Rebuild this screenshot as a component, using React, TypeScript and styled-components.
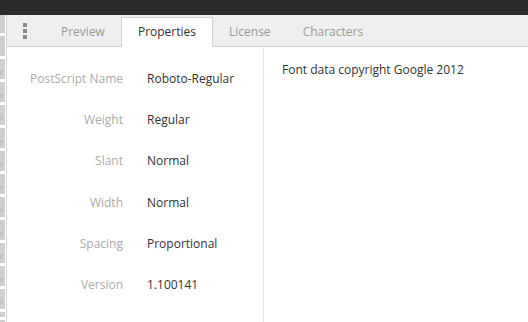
import React from "react";
import styled, { createGlobalStyle } from "styled-components";

const Global = createGlobalStyle`
  html, body { margin: 0; padding: 0; background: #fff; }
  body { font-family: "Open Sans", "Noto Sans", sans-serif; font-size: 12px; }
  #root { width: 528px; height: 322px; overflow: hidden; }
`;

const Window = styled.div`
  width: 528px;
  height: 322px;
  display: flex;
  flex-direction: column;
  overflow: hidden;
`;

const TitleBar = styled.div`
  height: 15px;
  flex: none;
  background: #2b2b2b;
`;

const Body = styled.div`
  flex: 1;
  display: flex;
  min-height: 0;
`;

const SideStrip = styled.div`
  width: 5px;
  flex: none;
  background: repeating-linear-gradient(
    to bottom,
    #ffffff 0px,
    #ffffff 3px,
    #cfcfcf 3px,
    #cfcfcf 23px
  );
  background-position: 0 -5px;
  border-right: 1px solid #ffffff;
`;

const StripGlyphs = styled.div`
  display: flex;
  flex-direction: column;
  gap: 19px;
  padding-top: 56px;
  align-items: flex-start;
`;

const Glyph = styled.span`
  width: 4px;
  height: 4px;
  background: linear-gradient(135deg, #9fb7d8, #e7d7a8);
  opacity: 0.9;
`;

const Panel = styled.div`
  flex: 1;
  display: flex;
  flex-direction: column;
  border-left: 1px solid #d6d6d6;
  min-width: 0;
`;

const TabBar = styled.div`
  height: 31px;
  flex: none;
  background: #efefef;
  border-bottom: 1px solid #d4d4d4;
  display: flex;
  align-items: flex-end;
  padding-left: 16px;
`;

const Handle = styled.div`
  display: flex;
  flex-direction: column;
  gap: 2px;
  align-self: center;
  margin-right: 18px;
`;

const Dot = styled.span`
  width: 4px;
  height: 4px;
  background: #8a8a8a;
`;

const Tab = styled.div<{ $active?: boolean }>`
  box-sizing: border-box;
  padding: 0 ${(p) => (p.$active ? "16px" : "15px")} 2px;
  display: flex;
  align-items: center;
  color: ${(p) => (p.$active ? "#333" : "#999")};
  background: ${(p) => (p.$active ? "#fff" : "transparent")};
  border: 1px solid ${(p) => (p.$active ? "#d4d4d4" : "transparent")};
  border-bottom: none;
  margin-bottom: ${(p) => (p.$active ? "-1px" : "0")};
  height: ${(p) => (p.$active ? "30px" : "29px")};
`;

const Content = styled.div`
  flex: 1;
  display: flex;
  min-height: 0;
`;

const PropGrid = styled.div`
  width: 256px;
  flex: none;
  border-right: 1px solid #e8e8e8;
  display: grid;
  grid-template-columns: 116px 1fr;
  grid-auto-rows: 41.2px;
  column-gap: 24px;
  align-content: start;
  padding-top: 11px;
`;

const Label = styled.div`
  color: #ababab;
  display: flex;
  align-items: center;
  justify-content: flex-end;
`;

const Value = styled.div`
  color: #333333;
  display: flex;
  align-items: center;
`;

const Notes = styled.div`
  padding: 14px 18px;
  color: #333333;
`;

const props: [string, string][] = [
  ["PostScript Name", "Roboto-Regular"],
  ["Weight", "Regular"],
  ["Slant", "Normal"],
  ["Width", "Normal"],
  ["Spacing", "Proportional"],
  ["Version", "1.100141"],
];

export default function App() {
  return (
    <Window>
      <Global />
      <TitleBar />
      <Body>
        <SideStrip>
          <StripGlyphs>
            {Array.from({ length: 12 }).map((_, i) => (
              <Glyph key={i} />
            ))}
          </StripGlyphs>
        </SideStrip>
        <Panel>
          <TabBar>
            <Handle>
              <Dot />
              <Dot />
              <Dot />
            </Handle>
            <Tab>Preview</Tab>
            <Tab $active>Properties</Tab>
            <Tab>License</Tab>
            <Tab>Characters</Tab>
          </TabBar>
          <Content>
            <PropGrid>
              {props.map(([k, v]) => (
                <React.Fragment key={k}>
                  <Label>{k}</Label>
                  <Value>{v}</Value>
                </React.Fragment>
              ))}
            </PropGrid>
            <Notes>Font data copyright Google 2012</Notes>
          </Content>
        </Panel>
      </Body>
    </Window>
  );
}
